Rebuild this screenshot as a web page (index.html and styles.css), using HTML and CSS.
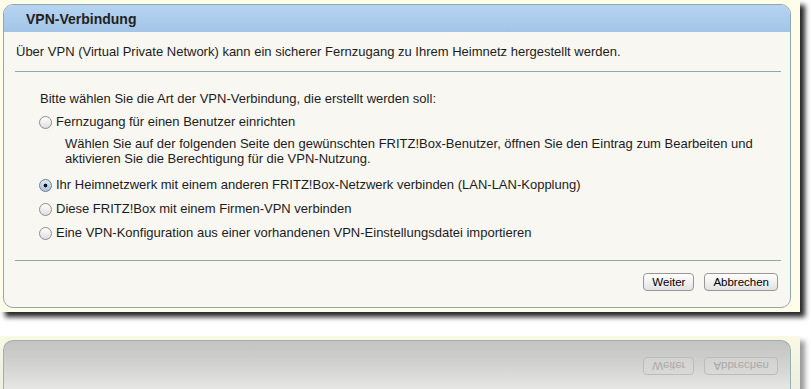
FILE: index.html
```html
<!DOCTYPE html>
<html lang="de">
<head>
    <meta charset="UTF-8">
    <meta name="viewport" content="width=device-width, initial-scale=1.0">
    <title>VPN-Verbindung</title>
    <link rel="stylesheet" href="styles.css">
</head>
<body>

    <div class="panel">
        <div class="dialog">
            <div class="dialog-head">VPN-Verbindung</div>
            <p class="intro">Über VPN (Virtual Private Network) kann ein sicherer Fernzugang zu Ihrem Heimnetz hergestellt werden.</p>
            <div class="rule"></div>

            <div class="choices">
                <p class="question">Bitte wählen Sie die Art der VPN-Verbindung, die erstellt werden soll:</p>
                <label class="option first"><input type="radio" name="vpnType">Fernzugang für einen Benutzer einrichten</label>
                <p class="hint">Wählen Sie auf der folgenden Seite den gewünschten FRITZ!Box-Benutzer, öffnen Sie den Eintrag zum Bearbeiten und aktivieren Sie die Berechtigung für die VPN-Nutzung.</p>
                <label class="option second"><input type="radio" name="vpnType" checked>Ihr Heimnetzwerk mit einem anderen FRITZ!Box-Netzwerk verbinden (LAN-LAN-Kopplung)</label>
                <label class="option"><input type="radio" name="vpnType">Diese FRITZ!Box mit einem Firmen-VPN verbinden</label>
                <label class="option"><input type="radio" name="vpnType">Eine VPN-Konfiguration aus einer vorhandenen VPN-Einstellungsdatei importieren</label>
            </div>

            <div class="dialog-foot">
                <div class="rule"></div>
                <div class="buttons">
                    <button class="btn">Weiter</button>
                    <button class="btn">Abbrechen</button>
                </div>
            </div>
        </div>
    </div>

    <!-- mirrored copy of the bottom edge -->
    <div class="reflection">
        <div class="reflection-box">
            <div class="buttons mirrored">
                <span class="btn ghost">Weiter</span>
                <span class="btn ghost">Abbrechen</span>
            </div>
        </div>
    </div>

</body>
</html>
```

FILE: styles.css
```css
/* Page */
body {
    margin: 0;
    background-color: #fff;
    font-family: "Liberation Sans", Arial, sans-serif;
    font-size: 13px;
    color: #1c1c1c;
}

p {
    margin: 0;
}

/* Cream screenshot panel with its drop shadow */
.panel {
    box-sizing: border-box;
    width: 800px;
    height: 312px;
    padding: 4px 9px 4px 3px;
    background-color: #fdfdea;
    box-shadow: 5px 5px 5px rgba(0, 0, 0, 0.85);
}

.dialog {
    box-sizing: border-box;
    height: 100%;
    display: flex;
    flex-direction: column;
    background-color: #f8f7f2;
    border: 1px solid #8ea8ab;
    border-radius: 10px;
    overflow: hidden;
}

.dialog-head {
    height: 27px;
    line-height: 28px;
    padding-left: 22px;
    background: linear-gradient(#b6d4f2, #a3c5e8);
    font-size: 14px;
    font-weight: bold;
    color: #222;
}

.intro {
    margin: 12px 12px 0 12px;
    line-height: 15px;
}

.rule {
    height: 1px;
    margin: 12px 9px 0 11px;
    background-color: #8ea8ab;
}

/* Options */
.choices {
    margin-top: 19px;
    padding: 0 20px 0 36px;
    line-height: 15px;
}

.option {
    display: flex;
    align-items: center;
    gap: 4px;
    margin: 9px 0 0 -1px;
}

.option.first {
    margin-top: 8px;
}

.option.second {
    margin-top: 11px;
}

.option input {
    appearance: none;
    -webkit-appearance: none;
    width: 13px;
    height: 13px;
    margin: 2px 0 0 0;
    flex: none;
    border: 1px solid #8d8d8d;
    border-radius: 50%;
    background: linear-gradient(#ffffff, #dedede);
    box-sizing: border-box;
}

.option input:checked {
    border-color: #6f7f90;
    background: radial-gradient(circle, #111 0 1.6px, transparent 2.2px), linear-gradient(#dfe9f4, #a9c3de);
}

.hint {
    margin: 7px 0 0 25px;
}

/* Footer with buttons */
.dialog-foot {
    margin-top: auto;
}

.dialog-foot .rule {
    margin-top: 0;
}

.buttons {
    display: flex;
    justify-content: flex-end;
    gap: 10px;
    padding: 12px 12px 16px 0;
}

.btn {
    box-sizing: border-box;
    height: 18px;
    padding: 0 8px;
    font-family: "Liberation Sans", Arial, sans-serif;
    font-size: 11.5px;
    line-height: 16px;
    color: #000;
    background: linear-gradient(#ffffff, #f1f1f1 50%, #e2e2e2);
    border: 1px solid #979797;
    border-radius: 4px;
}

/* Reflection below the panel */
.reflection {
    box-sizing: border-box;
    width: 800px;
    height: 53px;
    margin-top: 24px;
    padding: 4px 9px 0 3px;
    background: linear-gradient(#f9f9e4, #eeeee2);
    box-shadow: 5px 5px 5px rgba(0, 0, 0, 0.4);
    clip-path: inset(0 -12px -12px 0);
}

.reflection-box {
    box-sizing: border-box;
    height: 100%;
    border: 1px solid #9db0b2;
    border-bottom: none;
    border-radius: 10px 10px 0 0;
    background: linear-gradient(#c3c3c2, #d2d2d1 50%, #e6e6e5);
}

.mirrored {
    padding: 0 12px 16px 0;
    transform: scaleY(-1);
}

.btn.ghost {
    color: #a9a9a9;
    background: linear-gradient(#d9d9d8, #d2d2d1);
    border-color: #bcbcbc;
}
```
